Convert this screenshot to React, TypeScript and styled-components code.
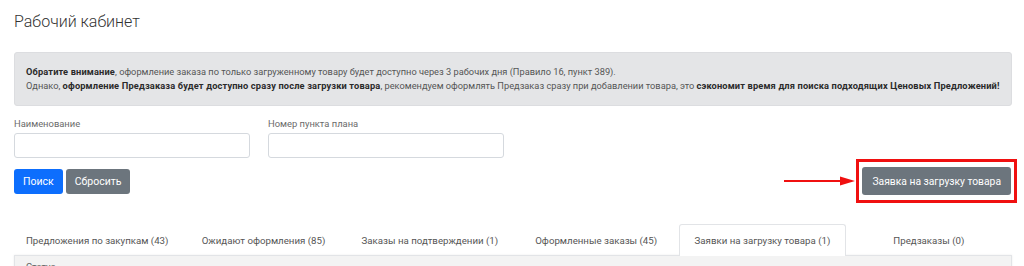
import React from "react";
import styled, { createGlobalStyle } from "styled-components";

const GlobalStyle = createGlobalStyle`
  html, body {
    margin: 0;
    padding: 0;
    background: #ffffff;
    font-family: Roboto, "Liberation Sans", Arial, sans-serif;
    overflow: hidden;
  }
  * { box-sizing: border-box; }
`;

const Page = styled.div`
  padding: 12px 12px 0 14px;
  color: #555;
`;

const Title = styled.h1`
  margin: 0;
  font-size: 16px;
  line-height: 20px;
  font-weight: 300;
  color: #333;
`;

const Notice = styled.div`
  margin-top: 20px;
  padding: 12px 11px;
  background: #e4e5e7;
  border: 1px solid #dcdde0;
  border-radius: 3px;
  font-size: 9.25px;
  line-height: 14px;
  color: #555;
  white-space: nowrap;

  b {
    color: #2a2a2a;
    font-weight: 700;
    letter-spacing: 0.15px;
  }
`;

const Filters = styled.div`
  display: flex;
  gap: 18px;
  margin-top: 11px;
`;

const Field = styled.label`
  display: flex;
  flex-direction: column;
  gap: 2px;
  width: 236px;
  font-size: 9.4px;
  line-height: 14px;
  font-weight: 400;
  color: #6a6a6a;
`;

const Input = styled.input`
  height: 25px;
  border: 1px solid #d5d9de;
  border-radius: 3px;
  background: #fff;
`;

const ActionRow = styled.div`
  display: flex;
  align-items: center;
  justify-content: space-between;
  margin-top: 1px;
`;

const ButtonGroup = styled.div`
  display: flex;
  gap: 3px;
`;

const Button = styled.button<{ $variant?: "primary" | "secondary" }>`
  height: 25px;
  padding: 0 9px;
  border: none;
  border-radius: 3px;
  font-family: inherit;
  font-size: 10.5px;
  color: #fff;
  background: ${({ $variant }) => ($variant === "primary" ? "#0d6efd" : "#6c757d")};
`;

const UploadButton = styled(Button)`
  height: 28px;
  padding: 0 10px;
  font-size: 10.3px;
`;

const Highlight = styled.div`
  display: flex;
  align-items: center;
`;

const RedFrame = styled.div`
  border: 3px solid #f01010;
  padding: 5px 3px;
  margin-right: -5px;
`;

const Tabs = styled.div`
  display: grid;
  grid-template-columns: repeat(6, 1fr);
  margin-top: 21px;
`;

const Tab = styled.div<{ $active?: boolean }>`
  height: 32px;
  display: flex;
  align-items: center;
  justify-content: center;
  font-size: 9.7px;
  color: #555;
  border: 1px solid ${({ $active }) => ($active ? "#e2e4e7" : "transparent")};
  border-bottom: none;
  border-radius: 3px 3px 0 0;
  background: ${({ $active }) => ($active ? "#fff" : "transparent")};
  position: relative;
  z-index: ${({ $active }) => ($active ? 1 : 0)};
`;

const Panel = styled.div`
  height: 40px;
  margin-top: -1px;
  background: #f3f3f3;
  border: 1px solid #e2e4e7;
  box-shadow: 0 0 2px rgba(0, 0, 0, 0.08);
  padding: 5px 11px;
  font-size: 9.4px;
  color: #666;
`;

const tabs = [
  "Предложения по закупкам (43)",
  "Ожидают оформления (85)",
  "Заказы на подтверждении (1)",
  "Оформленные заказы (45)",
  "Заявки на загрузку товара (1)",
  "Предзаказы (0)",
];

const Arrow = () => (
  <svg width="72" height="10" viewBox="0 0 72 10">
    <line x1="0" y1="5" x2="60" y2="5" stroke="#f01010" strokeWidth="2" />
    <polygon points="56,0.5 71,5 56,9.5" fill="#f01010" />
  </svg>
);

export default function App() {
  return (
    <Page>
      <GlobalStyle />
      <Title>Рабочий кабинет</Title>
      <Notice>
        <b>Обратите внимание</b>, оформление заказа по только загруженному товару будет доступно
        через 3 рабочих дня (Правило 16, пункт 389).
        <br />
        Однако, <b>оформление Предзаказа будет доступно сразу после загрузки товара</b>,
        рекомендуем оформлять Предзаказ сразу при добавлении товара, это{" "}
        <b>сэкономит время для поиска подходящих Ценовых Предложений!</b>
      </Notice>
      <Filters>
        <Field>
          Наименование
          <Input />
        </Field>
        <Field>
          Номер пункта плана
          <Input />
        </Field>
      </Filters>
      <ActionRow>
        <ButtonGroup>
          <Button $variant="primary">Поиск</Button>
          <Button>Сбросить</Button>
        </ButtonGroup>
        <Highlight>
          <Arrow />
          <RedFrame>
            <UploadButton>Заявка на загрузку товара</UploadButton>
          </RedFrame>
        </Highlight>
      </ActionRow>
      <Tabs>
        {tabs.map((t, i) => (
          <Tab key={t} $active={i === 4}>
            {t}
          </Tab>
        ))}
      </Tabs>
      <Panel>Статус</Panel>
    </Page>
  );
}
